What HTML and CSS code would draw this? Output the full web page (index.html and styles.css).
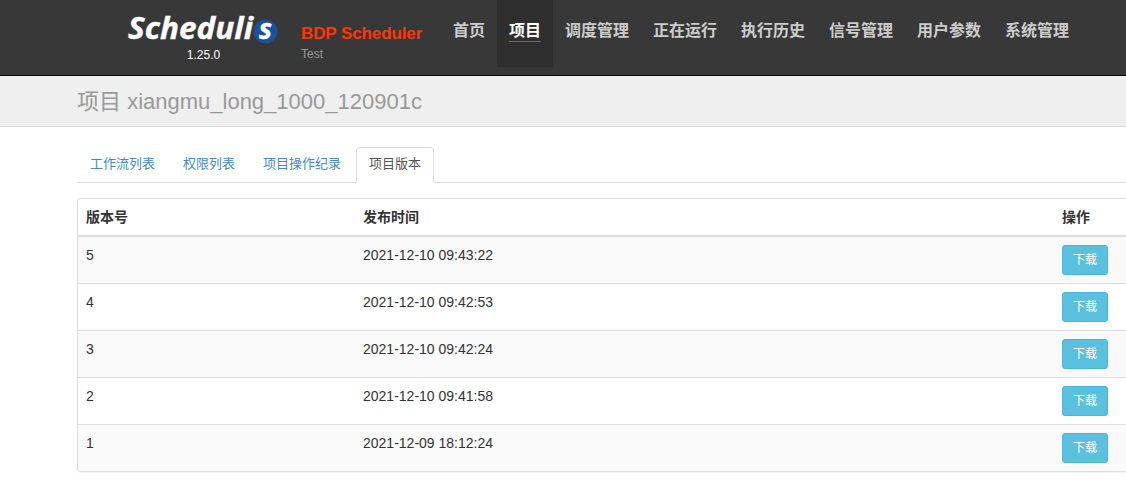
FILE: index.html
```html
<!DOCTYPE html>
<html lang="zh-CN">
<head>
<meta charset="utf-8">
<title>Schedulis</title>
<link rel="stylesheet" href="styles.css">
</head>
<body>
<header class="navbar">
  <div class="brand">
    <div class="logo">
      <svg width="152" height="44" viewBox="0 -8 152 44" role="img" aria-label="Schedulis">
        <circle cx="138.5" cy="22.5" r="12" fill="#1b519c"/>
        <text class="logo-word" x="1" y="30" textLength="125" lengthAdjust="spacingAndGlyphs">Scheduli</text>
        <text class="logo-end" x="132" y="30" textLength="13" lengthAdjust="spacingAndGlyphs">s</text>
      </svg>
    </div>
    <div class="version">1.25.0</div>
  </div>
  <div class="product">
    <div class="product-name">BDP Scheduler</div>
    <div class="product-env">Test</div>
  </div>
  <nav class="menu">
    <a class="menu-item"><span>首页</span></a>
    <a class="menu-item active"><span>项目</span></a>
    <a class="menu-item"><span>调度管理</span></a>
    <a class="menu-item"><span>正在运行</span></a>
    <a class="menu-item"><span>执行历史</span></a>
    <a class="menu-item"><span>信号管理</span></a>
    <a class="menu-item"><span>用户参数</span></a>
    <a class="menu-item"><span>系统管理</span></a>
  </nav>
</header>
<div class="page-header"><h1>项目 <span class="project-name">xiangmu_long_1000_120901c</span></h1></div>
<main class="content">
  <ul class="tabs">
    <li class="tab">工作流列表</li>
    <li class="tab">权限列表</li>
    <li class="tab">项目操作纪录</li>
    <li class="tab active">项目版本</li>
  </ul>
  <div class="versions">
    <div class="row head"><div>版本号</div><div>发布时间</div><div>操作</div></div>
    <div class="row"><div>5</div><div>2021-12-10 09:43:22</div><div><button class="btn">下载</button></div></div>
    <div class="row"><div>4</div><div>2021-12-10 09:42:53</div><div><button class="btn">下载</button></div></div>
    <div class="row"><div>3</div><div>2021-12-10 09:42:24</div><div><button class="btn">下载</button></div></div>
    <div class="row"><div>2</div><div>2021-12-10 09:41:58</div><div><button class="btn">下载</button></div></div>
    <div class="row"><div>1</div><div>2021-12-09 18:12:24</div><div><button class="btn">下载</button></div></div>
  </div>
</main>
</body>
</html>
```
FILE: styles.css
```css
* { box-sizing: border-box; }
body {
  margin: 0;
  height: 486px;
  overflow: hidden;
  background: #fff;
  color: #333;
  font: 14px/20px "Liberation Sans", "Noto Sans CJK SC", sans-serif;
}
.navbar {
  display: flex;
  height: 76px;
  padding-left: 127px;
  background: #383838;
  border-bottom: 1px solid #000;
}
.brand { width: 174px; padding-top: 1px; }
.logo { height: 44px; }
.logo svg { display: block; overflow: visible; }
.logo-word, .logo-end {
  font-family: "Open Sans", sans-serif;
  font-style: italic;
  font-weight: 700;
  fill: #fff;
  stroke: #fff;
  stroke-width: .4px;
}
.logo-word { font-size: 31px; }
.logo-end { font-size: 28px; }
.version {
  width: 153px;
  color: #fff;
  font-size: 12px;
  text-align: center;
}
.product { width: 140px; padding-top: 24px; }
.product-name {
  color: #ff3601;
  font: bold 17px/20px "Liberation Sans", sans-serif;
  letter-spacing: -0.1px;
  white-space: nowrap;
}
.product-env { color: #999; font-size: 12px; line-height: 21px; }
.menu { display: flex; }
.menu-item {
  height: 67px;
  padding: 21px 12px 0;
  color: #ccc;
  font-size: 16px;
  font-weight: bold;
  white-space: nowrap;
}
.menu-item span { display: block; height: 21px; line-height: 20px; }
.menu-item.active { background: #2f2f2f; color: #fff; }
.menu-item.active span { border-bottom: 1px solid #ff3601; }
.page-header {
  height: 51px;
  padding-left: 77px;
  background: #efefef;
  border-bottom: 1px solid #dbdbdb;
}
.page-header h1 {
  margin: 0;
  color: #999;
  font-size: 22px;
  font-weight: normal;
  line-height: 50px;
  padding-top: 1px;
  height: 50px;
}
.content { padding: 20px 0 0 77px; }
.tabs {
  display: flex;
  gap: 2px;
  height: 36px;
  margin: 0 0 15px;
  padding: 0;
  list-style: none;
  border-bottom: 1px solid #ddd;
}
.tab {
  height: 36px;
  padding: 6px 12px;
  border: 1px solid transparent;
  border-radius: 4px 4px 0 0;
  color: #428bca;
  font-size: 13px;
}
.tab.active {
  background: #fff;
  border-color: #ddd #ddd #fff;
  color: #555;
}
.versions {
  height: 274px;
  border: 1px solid #ddd;
  border-right: 0;
  border-radius: 4px 0 0 4px;
  box-shadow: 0 1px 1px rgba(0, 0, 0, .05);
  overflow: hidden;
}
.row {
  display: grid;
  grid-template-columns: 277px 699px 72px;
  height: 47px;
  padding-top: 8px;
  border-bottom: 1px solid #ddd;
}
.row > div { padding-left: 8px; }
.row:nth-child(even) { background: #f9f9f9; }
.row:last-child { border-bottom: 0; }
.row.head { height: 38px; font-weight: bold; border-bottom: 2px solid #ddd; }
.btn {
  display: block;
  width: 46px;
  height: 30px;
  padding: 0;
  background: #5bc0de;
  border: 1px solid #46b8da;
  border-radius: 3px;
  color: #fff;
  font: 12px/18px "Liberation Sans", "Noto Sans CJK SC", sans-serif;
}
```
